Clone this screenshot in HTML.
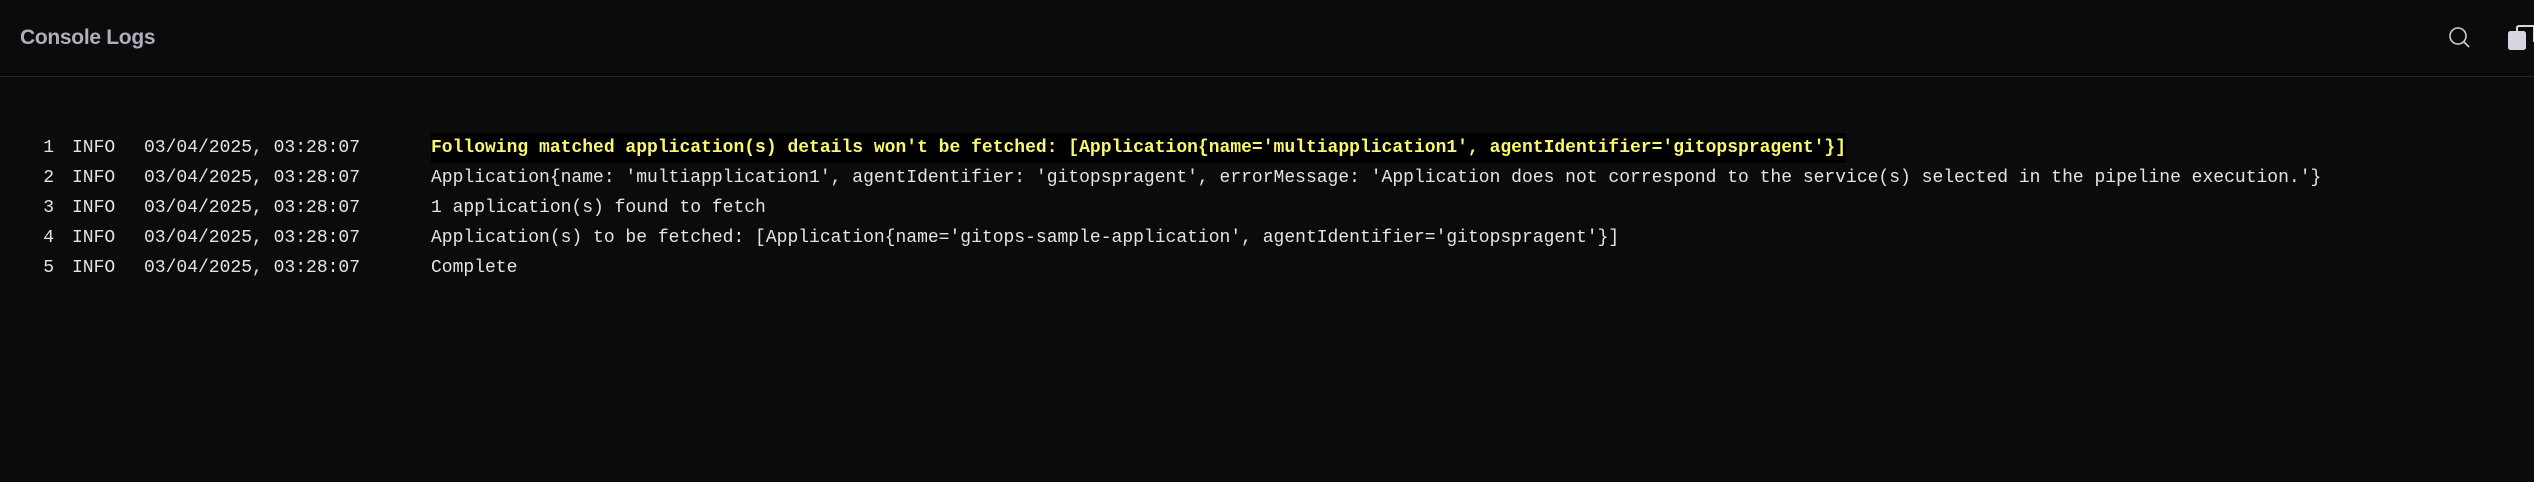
<!DOCTYPE html>
<html><head><meta charset="utf-8"><style>
body{margin:0;width:2534px;height:482px;background:#0b0b0c;overflow:hidden;font-family:"Liberation Sans",sans-serif;}
.title{position:absolute;left:20px;top:26px;font-size:21px;font-weight:bold;color:#aeaebd;letter-spacing:-0.3px}
.div{position:absolute;left:0;top:76px;width:2534px;height:1px;background:#26262b}
.rows{position:absolute;left:0;top:133px;font-family:"Liberation Mono",monospace;font-size:18px;color:#e4e4e8;}
.r{position:absolute;height:30px;line-height:30px;white-space:pre}
.n{position:absolute;left:38px;width:16px;text-align:right}
.i{position:absolute;left:72px}
.d{position:absolute;left:144px}
.m{position:absolute;left:431px}
.y{color:#fbf66a;font-weight:bold;background:#000}
</style></head><body>
<div class="title">Console Logs</div>
<svg style="position:absolute;left:2446px;top:24px" width="26" height="26" viewBox="0 0 26 26"><circle cx="12" cy="12" r="8" fill="none" stroke="#cfcfd6" stroke-width="1.6"/><line x1="18" y1="18" x2="23" y2="23" stroke="#cfcfd6" stroke-width="1.6"/></svg>
<svg style="position:absolute;left:2506px;top:24px" width="28" height="28" viewBox="0 0 28 28"><path d="M11 8 V4 Q11 2 13 2 H28 M28 2 V18" fill="none" stroke="#d6d6e0" stroke-width="2"/><rect x="2" y="7" width="18" height="19" rx="2.5" fill="#d6d6e0"/></svg>
<div class="div"></div>
<div class="rows">
<div class="r" style="top:0"><span class="n">1</span><span class="i">INFO</span><span class="d">03/04/2025, 03:28:07</span><span class="m y">Following matched application(s) details won't be fetched: [Application{name='multiapplication1', agentIdentifier='gitopspragent'}]</span></div>
<div class="r" style="top:30px"><span class="n">2</span><span class="i">INFO</span><span class="d">03/04/2025, 03:28:07</span><span class="m">Application{name: 'multiapplication1', agentIdentifier: 'gitopspragent', errorMessage: 'Application does not correspond to the service(s) selected in the pipeline execution.'}</span></div>
<div class="r" style="top:60px"><span class="n">3</span><span class="i">INFO</span><span class="d">03/04/2025, 03:28:07</span><span class="m">1 application(s) found to fetch</span></div>
<div class="r" style="top:90px"><span class="n">4</span><span class="i">INFO</span><span class="d">03/04/2025, 03:28:07</span><span class="m">Application(s) to be fetched: [Application{name='gitops-sample-application', agentIdentifier='gitopspragent'}]</span></div>
<div class="r" style="top:120px"><span class="n">5</span><span class="i">INFO</span><span class="d">03/04/2025, 03:28:07</span><span class="m">Complete</span></div>
</div>
</body></html>
